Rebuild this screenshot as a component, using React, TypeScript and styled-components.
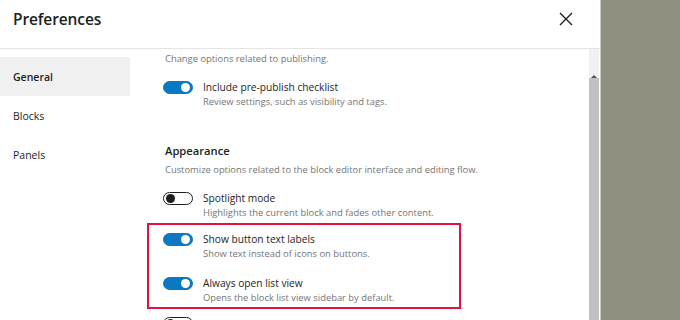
import styled, { createGlobalStyle } from "styled-components";

const GlobalStyle = createGlobalStyle`
  html, body {
    margin: 0;
    padding: 0;
    background: #8f9080;
  }
  body {
    font-family: "Open Sans", "Noto Sans", sans-serif;
    color: #1e1e1e;
  }
`;

const Page = styled.div`
  display: flex;
  width: 680px;
  height: 320px;
  overflow: hidden;
`;

const Modal = styled.div`
  width: 600px;
  height: 320px;
  background: #fff;
  border-right: 1px solid #c9c9c4;
  display: flex;
  flex-direction: column;
`;

const Header = styled.header`
  height: 49px;
  box-sizing: border-box;
  flex: none;
  display: flex;
  align-items: center;
  justify-content: space-between;
  padding: 0 27px 10px 13px;
  border-bottom: 1px solid #e4e4e4;
`;

const Title = styled.h1`
  margin: 0;
  font-size: 15.5px;
  font-weight: 600;
  letter-spacing: -0.1px;
`;

const CloseButton = styled.button`
  border: 0;
  background: none;
  padding: 0;
  width: 14px;
  height: 14px;
  display: flex;
  cursor: pointer;
`;

const Body = styled.div`
  flex: 1;
  display: flex;
  min-height: 0;
`;

const Sidebar = styled.nav`
  width: 130px;
  flex: none;
  padding-top: 8px;
  display: flex;
  flex-direction: column;
`;

const NavItem = styled.div<{ $active?: boolean }>`
  height: 39px;
  display: flex;
  align-items: center;
  padding-left: 13px;
  font-size: 10.5px;
  font-weight: ${(p) => (p.$active ? 600 : 400)};
  background: ${(p) => (p.$active ? "#f0f0f0" : "transparent")};
  color: #1e1e1e;
`;

const Content = styled.div`
  flex: 1;
  padding: 2px 0 0 35px;
  overflow: hidden;
`;

const SectionDesc = styled.p`
  margin: 0;
  font-size: 9.4px;
  color: #757575;
  line-height: 16px;
`;

const SectionTitle = styled.h2`
  margin: 33px 0 2px;
  font-size: 11.2px;
  font-weight: 600;
  line-height: 18px;
`;

const OptionRow = styled.div`
  display: flex;
  gap: 10px;
  align-items: flex-start;
  margin-top: 13px;
`;

const Switch = styled.span<{ $on?: boolean }>`
  position: relative;
  width: 30px;
  height: 13px;
  margin: 1px 0 0 -2px;
  flex: none;
  box-sizing: border-box;
  border-radius: 7px;
  background: ${(p) => (p.$on ? "#0a79c2" : "#fff")};
  border: 1.5px solid ${(p) => (p.$on ? "#0a79c2" : "#1e1e1e")};

  &::after {
    content: "";
    position: absolute;
    top: 0.5px;
    left: ${(p) => (p.$on ? "17px" : "2px")};
    width: 9px;
    height: 9px;
    border-radius: 50%;
    background: ${(p) => (p.$on ? "#fff" : "#1e1e1e")};
  }
`;

const OptionText = styled.div`
  display: flex;
  flex-direction: column;
`;

const OptionLabel = styled.span`
  font-size: 10.2px;
  line-height: 15px;
`;

const OptionHelp = styled.span`
  font-size: 9.4px;
  line-height: 14px;
  color: #757575;
`;

const Highlight = styled.div`
  margin: 3px 0 0 -18px;
  width: 314px;
  box-sizing: border-box;
  border: 2px solid #e5103b;
  padding: 0 0 2px 16px;
  & > ${OptionRow}:first-child {
    margin-top: 7px;
  }
  & > ${OptionRow} + ${OptionRow} {
    margin-top: 15px;
  }
  & + ${OptionRow} {
    margin-top: 7px;
  }
`;

const Scrollbar = styled.div`
  width: 10px;
  flex: none;
  margin-right: 1px;
  display: flex;
  flex-direction: column;
  background: #f1f1f1;
`;

const ScrollArrow = styled.div`
  height: 29px;
  display: flex;
  justify-content: center;
  padding-top: 7px;
  box-sizing: border-box;
  &::before {
    content: "";
    border-left: 3px solid transparent;
    border-right: 3px solid transparent;
    border-bottom: 3px solid #505050;
  }
`;

const ScrollThumb = styled.div`
  flex: 1;
  background: #c1c1c1;
`;

const Backdrop = styled.div`
  flex: 1;
  background: #8f9080;
`;

type Option = { label: string; help: string; on: boolean };

function Toggle({ label, help, on }: Option) {
  return (
    <OptionRow>
      <Switch $on={on} />
      <OptionText>
        <OptionLabel>{label}</OptionLabel>
        <OptionHelp>{help}</OptionHelp>
      </OptionText>
    </OptionRow>
  );
}

export default function App() {
  return (
    <Page>
      <GlobalStyle />
      <Modal>
        <Header>
          <Title>Preferences</Title>
          <CloseButton aria-label="Close">
            <svg width="14" height="14" viewBox="0 0 14 14">
              <path d="M1 1 L13 13 M13 1 L1 13" stroke="#1e1e1e" strokeWidth="1.4" />
            </svg>
          </CloseButton>
        </Header>
        <Body>
          <Sidebar>
            <NavItem $active>General</NavItem>
            <NavItem>Blocks</NavItem>
            <NavItem>Panels</NavItem>
          </Sidebar>
          <Content>
            <SectionDesc>Change options related to publishing.</SectionDesc>
            <Toggle
              on
              label="Include pre-publish checklist"
              help="Review settings, such as visibility and tags."
            />
            <SectionTitle>Appearance</SectionTitle>
            <SectionDesc>
              Customize options related to the block editor interface and editing flow.
            </SectionDesc>
            <Toggle
              on={false}
              label="Spotlight mode"
              help="Highlights the current block and fades other content."
            />
            <Highlight>
              <Toggle
                on
                label="Show button text labels"
                help="Show text instead of icons on buttons."
              />
              <Toggle
                on
                label="Always open list view"
                help="Opens the block list view sidebar by default."
              />
            </Highlight>
            <Toggle on={false} label="" help="" />
          </Content>
          <Scrollbar>
            <ScrollArrow />
            <ScrollThumb />
          </Scrollbar>
        </Body>
      </Modal>
      <Backdrop />
    </Page>
  );
}
